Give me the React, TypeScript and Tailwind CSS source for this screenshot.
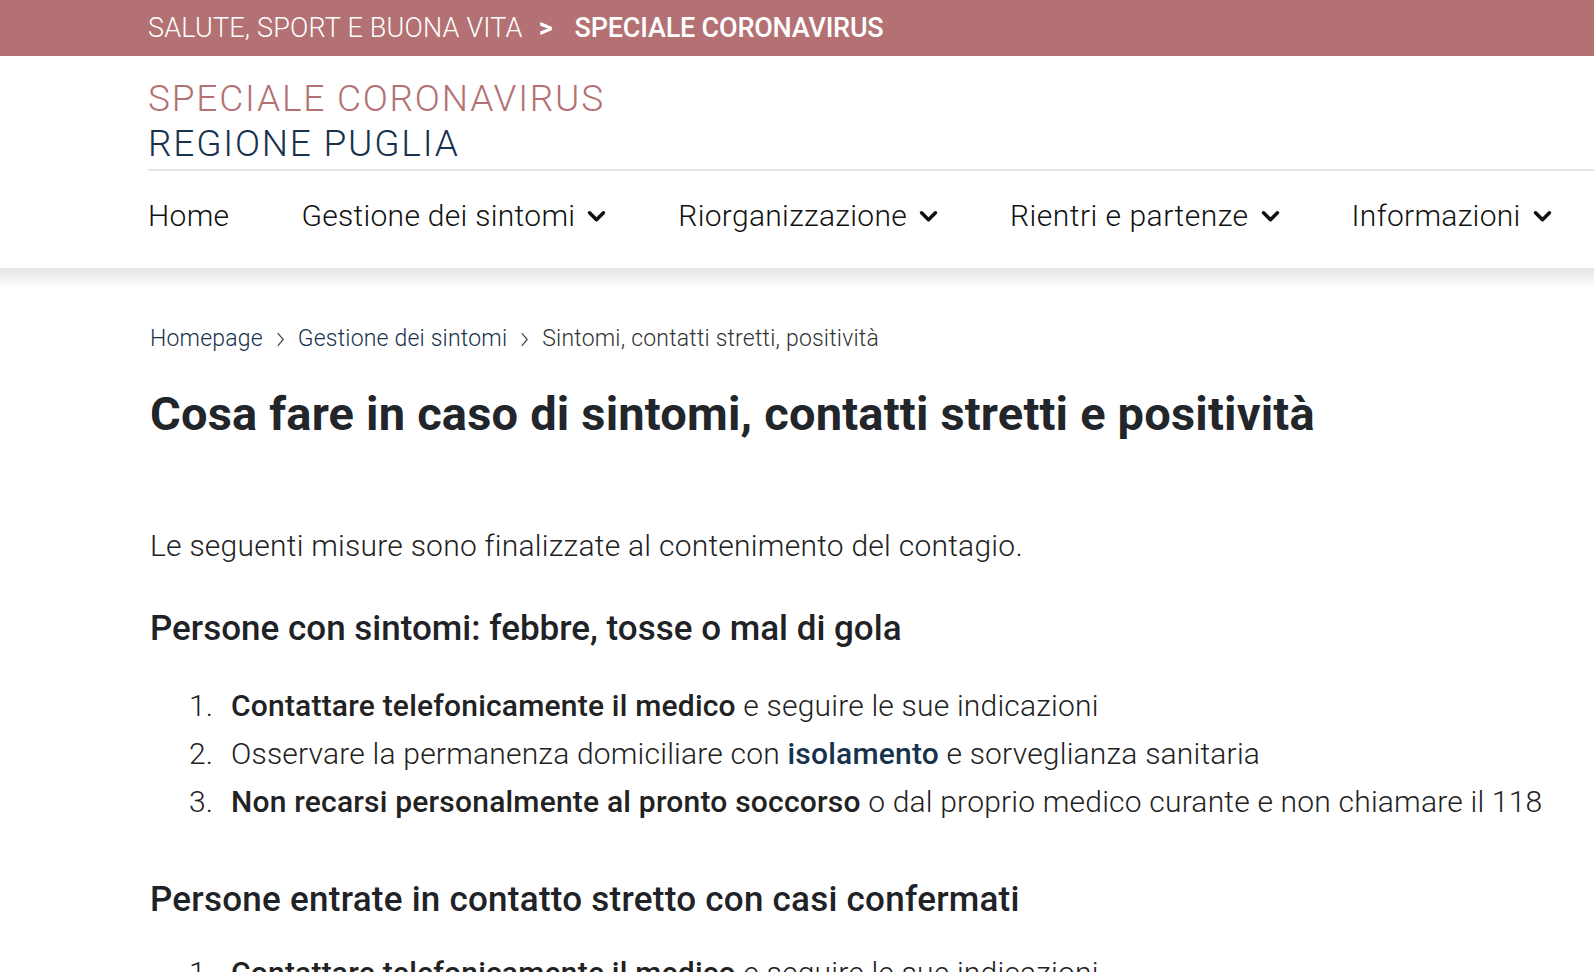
import React from 'react';

const NAV = ['Home', 'Gestione dei sintomi', 'Riorganizzazione', 'Rientri e partenze', 'Informazioni'];

function Chevron() {
  return (
    <svg viewBox="0 0 20 14" className="w-[19px] h-[13px] ml-[12px] mt-[2px]" fill="none">
      <path d="M2.5 3l7.5 7.5L17.5 3" stroke="#111" strokeWidth="3.8" strokeLinecap="round" strokeLinejoin="round" />
    </svg>
  );
}

function Crumb() {
  return (
    <svg viewBox="0 0 10 18" className="w-[9px] h-[17px] mx-[13px]" fill="none">
      <path d="M2 2l6 7-6 7" stroke="#444" strokeWidth="1.3" />
    </svg>
  );
}

export default function App() {
  const body = { fontFamily: 'Roboto, "Open Sans", sans-serif' };
  return (
    <div className="min-h-screen bg-white overflow-hidden" style={body}>
      {/* top bar */}
      <div className="h-[56px] bg-[#b37174] pl-[148px] flex items-center text-white text-[27px]">
        <span className="font-light tracking-[0.2px]">SALUTE, SPORT E BUONA VITA</span>
        <span className="font-bold ml-[16px] mr-[22px]">&gt;</span>
        <span className="font-medium tracking-[-0.2px]">SPECIALE CORONAVIRUS</span>
      </div>

      {/* header */}
      <div className="pl-[148px] pt-[20px]">
        <div className="text-[37px] leading-[45px] font-light tracking-[1.8px]">
          <div className="text-[#b37174]">SPECIALE CORONAVIRUS</div>
          <div className="text-[#17324d]">REGIONE PUGLIA</div>
        </div>
        <div className="mt-[3px] h-[2px] bg-[#e6e6e6]" />
        <nav className="h-[97px] pb-[8px] flex items-center gap-[72px] text-[30px] font-light text-[#111] tracking-[0.3px]">
          {NAV.map((n, i) => (
            <div key={n} className="flex items-center">
              <span className={i === 3 ? 'tracking-[0.5px]' : ''}>{n}</span>
              {i > 0 && <Chevron />}
            </div>
          ))}
        </nav>
      </div>
      <div className="h-[22px] bg-gradient-to-b from-[#e6e6e6] to-white" />

      {/* content */}
      <main className="pl-[150px] pr-[20px]">
        <div className="mt-[32px] flex items-center text-[23px] font-light tracking-[0.2px]">
          <span className="text-[#17324d]">Homepage</span>
          <Crumb />
          <span className="text-[#17324d]">Gestione dei sintomi</span>
          <Crumb />
          <span className="text-[#333]">Sintomi, contatti stretti, positività</span>
        </div>

        <h1 className="mt-[29px] text-[47px] leading-[56px] font-bold text-[#22262a] tracking-[0.2px]">
          Cosa fare in caso di sintomi, contatti stretti e positività
        </h1>

        <p className="mt-[84px] text-[30px] leading-[40px] font-light text-[#222] tracking-[0.25px]">
          Le seguenti misure sono finalizzate al contenimento del contagio.
        </p>

        <h2 className="mt-[42px] text-[35px] leading-[42px] font-medium text-[#1f2226]">
          Persone con sintomi: febbre, tosse o mal di gola
        </h2>

        <ol className="mt-[32px] pl-[39px] text-[30px] leading-[48px] font-light text-[#222] tracking-[0.2px]">
          <li className="flex">
            <span className="w-[42px]">1.</span>
            <span><b className="font-medium">Contattare telefonicamente il medico</b> e seguire le sue indicazioni</span>
          </li>
          <li className="flex">
            <span className="w-[42px]">2.</span>
            <span>Osservare la permanenza domiciliare con <b className="font-medium text-[#17324d]">isolamento</b> e sorveglianza sanitaria</span>
          </li>
          <li className="flex">
            <span className="w-[42px]">3.</span>
            <span><b className="font-medium">Non recarsi personalmente al pronto soccorso</b> o dal proprio medico curante e non chiamare il 118</span>
          </li>
        </ol>

        <h2 className="mt-[53px] text-[35px] leading-[42px] font-medium text-[#1f2226] tracking-[0.25px]">
          Persone entrate in contatto stretto con casi confermati
        </h2>

        <ol className="mt-[28px] pl-[39px] text-[30px] leading-[48px] font-light text-[#222] tracking-[0.2px]">
          <li className="flex">
            <span className="w-[42px]">1.</span>
            <span><b className="font-medium">Contattare telefonicamente il medico</b> e seguire le sue indicazioni</span>
          </li>
        </ol>
      </main>
    </div>
  );
}
